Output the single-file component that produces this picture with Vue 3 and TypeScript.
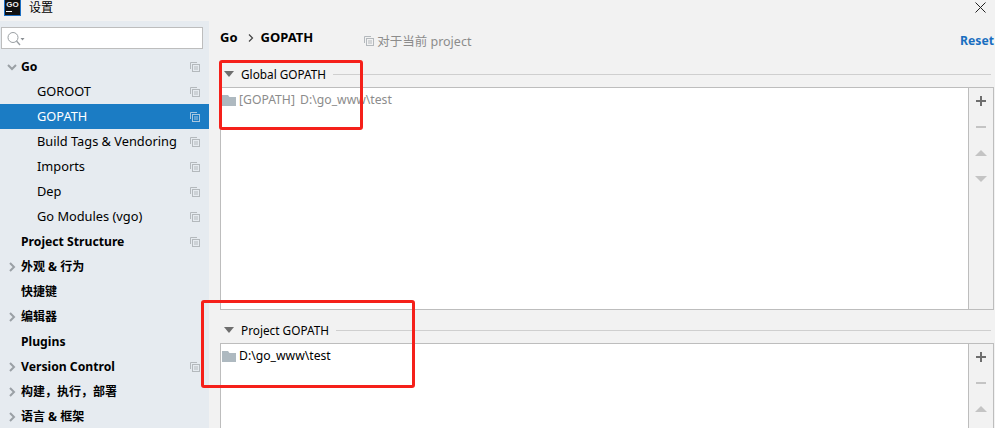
<script setup lang="ts">
interface Item { label: string; bold?: boolean; arrow?: 'down' | 'right'; child?: boolean; copy?: boolean; active?: boolean; cjk?: boolean }
const items: Item[] = [
  { label: 'Go', bold: true, arrow: 'down', copy: true },
  { label: 'GOROOT', child: true, copy: true },
  { label: 'GOPATH', child: true, copy: true, active: true },
  { label: 'Build Tags & Vendoring', child: true, copy: true },
  { label: 'Imports', child: true, copy: true },
  { label: 'Dep', child: true, copy: true },
  { label: 'Go Modules (vgo)', child: true, copy: true },
  { label: 'Project Structure', bold: true, copy: true },
  { label: '外观 & 行为', bold: true, arrow: 'right', cjk: true },
  { label: '快捷键', bold: true, cjk: true },
  { label: '编辑器', bold: true, arrow: 'right', cjk: true },
  { label: 'Plugins', bold: true },
  { label: 'Version Control', bold: true, arrow: 'right', copy: true },
  { label: '构建，执行，部署', bold: true, arrow: 'right', cjk: true },
  { label: '语言 & 框架', bold: true, arrow: 'right', cjk: true },
]
const sections = [
  { title: 'Global GOPATH', path: '[GOPATH] D:\\go_www\\test', muted: true, cls: 'global' },
  { title: 'Project GOPATH', path: 'D:\\go_www\\test', muted: false, cls: 'project' },
]
</script>

<template>
  <div class="win">
    <header class="titlebar">
      <div class="logo"><span class="logo-t">GO</span><span class="logo-u"></span></div>
      <span class="title">设置</span>
      <svg class="close" width="11" height="11" viewBox="0 0 11 11"><path d="M.5.5l10 10M10.5.5l-10 10" stroke="#222" stroke-width="1" fill="none"/></svg>
    </header>
    <div class="body">
      <aside class="side">
        <div class="search">
          <svg width="21" height="17" viewBox="0 0 21 17"><circle cx="8" cy="7.500" r="5" fill="none" stroke="#9a9fa3" stroke-width="1"/><path d="M11.500 11l3.500 4" stroke="#9a9fa3" stroke-width="1.300"/><path d="M15.500 8h4l-2 2.500z" fill="#8a8f93"/></svg>
        </div>
        <ul class="tree">
          <li v-for="it in items" :key="it.label" class="row" :class="{ active: it.active, child: it.child, bold: it.bold, cjk: it.cjk }">
            <svg v-if="it.arrow === 'down'" class="arrow" width="10" height="10" viewBox="0 0 10 10"><path d="M1 3l4 4 4-4" fill="none" stroke="#9aa0a5" stroke-width="2"/></svg>
            <svg v-else-if="it.arrow === 'right'" class="arrow" width="10" height="10" viewBox="0 0 10 10"><path d="M3 1l4 4-4 4" fill="none" stroke="#9aa0a5" stroke-width="2"/></svg>
            <span class="label">{{ it.label }}</span>
            <svg v-if="it.copy" class="copy" width="10" height="10" viewBox="0 0 10 10"><path d="M.5 7V.5H7" fill="none" :stroke="it.active ? '#a9c7e0' : '#b4b9bd'"/><rect x="2.500" y="2.500" width="7" height="7" fill="none" :stroke="it.active ? '#a9c7e0' : '#b4b9bd'"/><path d="M4 5h4M4 7h4" :stroke="it.active ? '#a9c7e0' : '#b4b9bd'"/></svg>
          </li>
        </ul>
      </aside>
      <main class="main">
        <div class="crumbs">
          <b>Go</b>
          <svg class="chev" width="6" height="8" viewBox="0 0 6 8"><path d="M1 .5l3.500 3.500-3.500 3.500" fill="none" stroke="#444" stroke-width="1.200"/></svg>
          <b>GOPATH</b>
          <svg class="copy-h" width="10" height="10" viewBox="0 0 10 10"><path d="M.5 7V.5H7" fill="none" stroke="#b4b9bd"/><rect x="2.500" y="2.500" width="7" height="7" fill="none" stroke="#b4b9bd"/><path d="M4 5h4M4 7h4" stroke="#b4b9bd"/></svg>
          <span class="scope">对于当前 project</span>
          <span class="reset">Reset</span>
        </div>
        <section v-for="s in sections" :key="s.title" class="sec" :class="s.cls">
          <div class="sec-head">
            <svg width="10" height="6" viewBox="0 0 10 6"><path d="M0 0h10L5 6z" fill="#6e6e6e"/></svg>
            <span class="sec-title">{{ s.title }}</span>
            <span class="rule"></span>
          </div>
          <div class="box">
            <div class="list">
              <div class="path" :class="{ muted: s.muted }">
                <svg width="14" height="11" viewBox="0 0 14 11"><path d="M0 0h6l1.500 2H14v9H0z" fill="#aeb9c0"/></svg>
                <span>{{ s.path }}</span>
              </div>
            </div>
            <div class="tools">
              <svg width="12" height="12" viewBox="0 0 12 12"><path d="M1 6h10M6 1v10" stroke="#6e6e6e" stroke-width="2"/></svg>
              <svg width="12" height="12" viewBox="0 0 12 12"><path d="M1 6h10" stroke="#c4c4c4" stroke-width="2"/></svg>
              <svg width="12" height="12" viewBox="0 0 12 12"><path d="M0 9l6-6 6 6z" fill="#c4c4c4"/></svg>
              <svg width="12" height="12" viewBox="0 0 12 12"><path d="M0 3l6 6 6-6z" fill="#c4c4c4"/></svg>
            </div>
          </div>
        </section>
      </main>
    </div>
    <div class="mark mark-a"></div>
    <div class="mark mark-b"></div>
  </div>
</template>

<style>
html, body { margin: 0; background: #f2f2f2; overflow: hidden; }
</style>

<style scoped>
.win {
  position: relative;
  width: 995px;
  height: 428px;
  overflow: hidden;
  background: #f2f2f2;
  color: #000;
  font: 12.800px "Noto Sans", "Noto Sans CJK SC", sans-serif;
}
.titlebar { height: 21px; display: flex; align-items: flex-start; }
.logo {
  width: 15px; height: 15px; margin: 0 0 0 4px; background: #111; border: 1px solid #1c6fc4; border-top: 0;
  display: flex; flex-direction: column; align-items: center; box-sizing: content-box;
}
.logo-t { font: bold 8px/9px "Liberation Sans", sans-serif; color: #eee; }
.logo-u { width: 6px; height: 1px; background: #fff; margin: 2px 0 0 -7px; }
.title { margin: 0 0 0 8px; font-size: 12px; line-height: 16px; }
.close { margin: 2px 9px 0 auto; }
.body { display: flex; height: 407px; }
.side { width: 209px; flex: none; background: #e6ebf0; }
.search {
  margin: 6px 6px 0 1px; height: 20px; background: #fff; border: 1px solid #bdbdbd;
  display: flex; align-items: center; padding-left: 3px;
}
.tree { list-style: none; margin: 5px 0 0; padding: 0; }
.row { height: 25px; display: flex; align-items: center; position: relative; padding-left: 21px; box-sizing: border-box; }
.row.child { padding-left: 37px; padding-bottom: 2px; }
.row.bold { font-weight: 700; font-size: 12.200px; }
.row.cjk { font-size: 12px; padding-bottom: 2px; }
.row.active { background: #1b7cc4; color: #fff; }
.arrow { position: absolute; left: 7px; top: 8px; }
.copy { position: absolute; left: 190px; top: 8px; }
.main { flex: 1; min-width: 0; padding: 0 1px 0 11px; }
.crumbs { height: 33px; display: flex; align-items: center; font-size: 13px; }
.crumbs b { margin-bottom: 1px; }
.chev { margin: 0 7px 0 10px; }
.copy-h { margin: 6px 0 0 51px; }
.scope { margin: 6px 0 0 3px; color: #8c8c8c; font-size: 12.500px; }
.reset { margin: 6px 0 0 auto; font-weight: 700; color: #1a6fc0; font-size: 12.200px; }
.sec-head { height: 26px; display: flex; align-items: center; padding-left: 4px; }
.sec-title { margin-left: 7px; font-size: 11.800px; }
.rule { flex: 1; height: 1px; background: #cfcfcf; margin: 0 3px 0 7px; }
.global { margin-top: 7px; }
.project { margin-top: 7px; }
.box { display: flex; border: 1px solid #bdbdbd; box-sizing: border-box; }
.global .box { height: 223px; }
.project .box { height: 130px; }
.list { flex: 1; background: #fff; padding: 5px 1px; }
.path { display: flex; align-items: center; gap: 3px; height: 14px; font-size: 12.200px; }
.path span { margin-top: -1px; }
.path.muted { color: #8c8c8c; word-spacing: 2px; }
.tools {
  width: 25px; flex: none; border-left: 1px solid #bdbdbd; display: flex; flex-direction: column;
  align-items: center; gap: 14px; padding-top: 7px; box-sizing: border-box;
}
.mark { position: absolute; border: 3px solid #f5201a; border-radius: 3px; box-sizing: border-box; }
.mark-a { left: 219px; top: 60px; width: 144px; height: 70px; }
.mark-b { left: 201px; top: 300px; width: 214px; height: 88px; }
</style>
